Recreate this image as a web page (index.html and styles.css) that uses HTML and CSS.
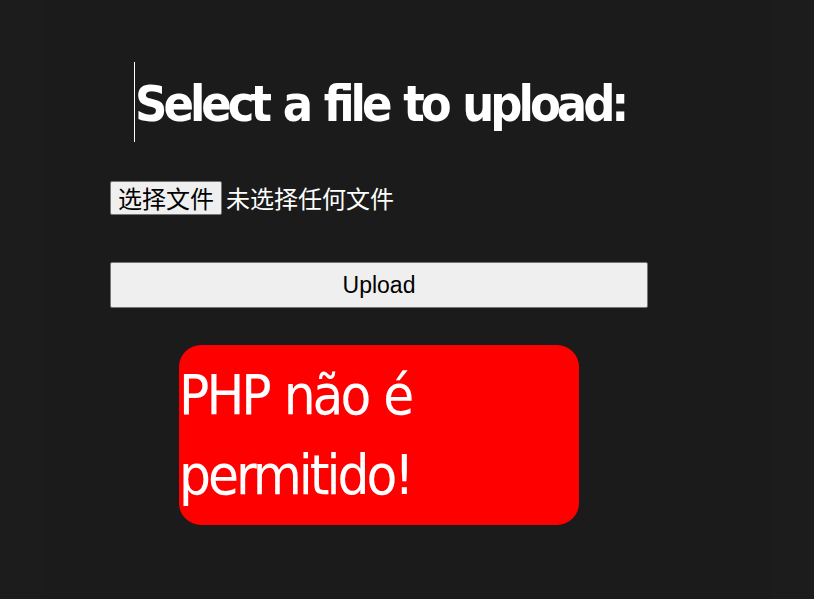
FILE: index.html
```html
<!DOCTYPE html>
<html lang="pt">
<head>
<meta charset="utf-8">
<title>Upload</title>
<link rel="stylesheet" href="styles.css">
</head>
<body>
<main class="page">
  <h1 class="title">Select a file to upload:</h1>
  <form class="upload-form">
    <div class="file-picker">
      <button type="button" class="file-btn">选择文件</button>
      <span class="file-name">未选择任何文件</span>
    </div>
    <button type="submit" class="submit-btn">Upload</button>
  </form>
  <div class="alert">PHP não é permitido!</div>
</main>
</body>
</html>
```

FILE: styles.css
```css
html, body {
  margin: 0;
  padding: 0;
  background: #1c1c1c;
}

.page {
  margin: 0 42px;
  min-height: 100vh;
  box-sizing: border-box;
  background: #1b1b1b;
  padding: 62px 0 0 68px;
  display: flex;
  flex-direction: column;
  align-items: flex-start;
}

.title {
  margin: 0 0 0 24px;
  border-left: 1px solid #ffffff;
  color: #ffffff;
  font-family: "DejaVu Sans Condensed", "DejaVu Sans", sans-serif;
  font-stretch: condensed;
  font-weight: 700;
  font-size: 50px;
  line-height: 85px;
  height: 80px;
  letter-spacing: -4px;
  word-spacing: 3px;
}

.upload-form {
  display: flex;
  flex-direction: column;
  align-items: flex-start;
  margin-top: 39px;
  gap: 47px;
}

.file-picker {
  display: flex;
  align-items: center;
  gap: 4px;
  font-family: "Noto Sans CJK SC", sans-serif;
  font-size: 24px;
}

.file-btn {
  font-family: "Noto Sans CJK SC", sans-serif;
  font-size: 24px;
  line-height: 30px;
  height: 34px;
  padding: 0 7px;
  border: 1px solid #767676;
  border-radius: 2px;
  background: #efefef;
  color: #000;
}

.file-name {
  color: #ffffff;
  line-height: 34px;
}

.submit-btn {
  width: 538px;
  height: 46px;
  border: 1px solid #767676;
  border-radius: 2px;
  background: #efefef;
  color: #000;
  font-family: "Liberation Sans", Arial, sans-serif;
  font-size: 23px;
  padding: 0;
}

.alert {
  margin: 37px 0 0 69px;
  width: 400px;
  height: 180px;
  box-sizing: border-box;
  padding-top: 10px;
  background: #ff0000;
  border-radius: 22px;
  color: #ffffff;
  font-family: "DejaVu Sans Condensed", "DejaVu Sans", sans-serif;
  font-stretch: condensed;
  font-weight: 400;
  font-size: 56px;
  line-height: 80px;
  letter-spacing: -3px;
  word-spacing: 2px;
}
```
